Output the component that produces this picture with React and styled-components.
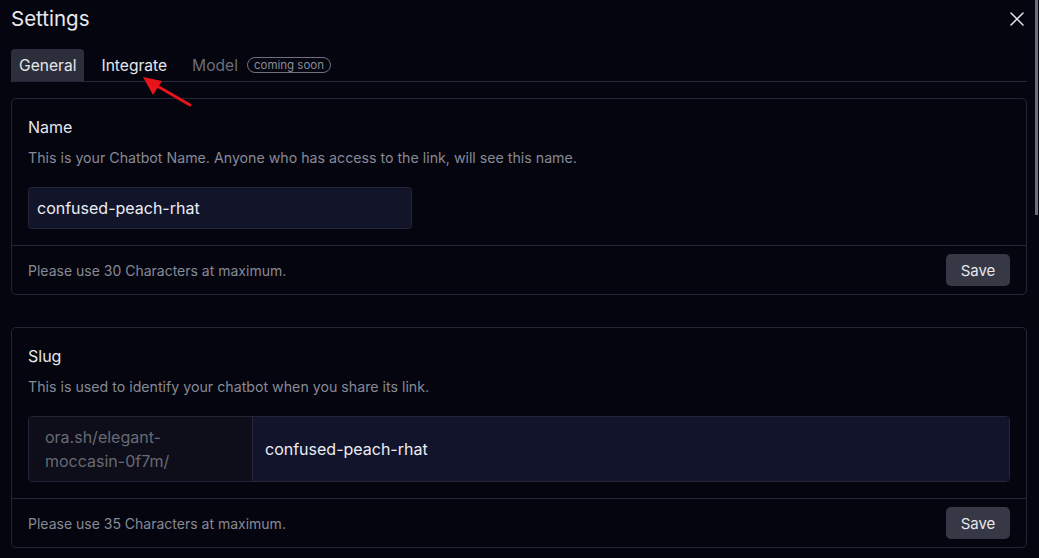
import React from "react"
import styled, { createGlobalStyle } from "styled-components"
import { X } from "lucide-react"

const Global = createGlobalStyle`
  html, body {
    margin: 0;
    padding: 0;
    background: #04050f;
    overflow: hidden;
  }
  * { box-sizing: border-box; }
`

const Scroller = styled.div`
  position: relative;
  height: 100vh;
  overflow: hidden;
  font-family: Inter, "Noto Sans", sans-serif;
  color: #e4e5ea;
`

const ScrollThumb = styled.div`
  position: absolute;
  top: 0;
  right: 1px;
  width: 3px;
  height: 215px;
  background: #6c6f7b;
`

const Content = styled.div`
  padding: 0 12px 0 11px;
`

const Header = styled.div`
  display: flex;
  align-items: center;
  justify-content: space-between;
  height: 36px;
  padding-top: 1px;
`

const Title = styled.h2`
  margin: 0;
  font-size: 20.5px;
  font-weight: 400;
  color: #e8e9ec;
`

const Close = styled.button`
  display: flex;
  background: none;
  border: 0;
  padding: 0;
  margin-right: -2px;
  color: #e8e9ec;
  cursor: pointer;
`

const TabBar = styled.div`
  display: flex;
  align-items: flex-end;
  gap: 9px;
  margin-top: 13px;
  border-bottom: 1px solid #262837;
`

const Tab = styled.div`
  display: flex;
  align-items: center;
  height: 32px;
  padding: 0 8px;
  font-size: 15.6px;
  border-radius: 4px 4px 0 0;
  background: ${p => (p.$active ? "#2c2e3b" : "transparent")};
  color: ${p => (p.$muted ? "#6a6d78" : "#e6e7eb")};
`

const Badge = styled.span`
  margin-left: 9px;
  padding: 0 6px;
  height: 16px;
  line-height: 14px;
  font-size: 11.5px;
  color: #8a8d98;
  border: 1px solid #6f727d;
  border-radius: 999px;
`

const Cards = styled.div`
  display: flex;
  flex-direction: column;
  gap: 32px;
  margin-top: 16px;
`

const Card = styled.section`
  border: 1px solid #232636;
  border-radius: 5px;
`

const CardBody = styled.div`
  padding: 18px 16px 16px;
`

const CardTitle = styled.h3`
  margin: 0;
  font-size: 16px;
  line-height: 20px;
  font-weight: 400;
  color: #e6e7eb;
`

const Hint = styled.p`
  margin: 11px 0 19px;
  font-size: 14.2px;
  line-height: 20px;
  color: #878a95;
`

const TextInput = styled.div`
  width: 384px;
  height: 42px;
  display: flex;
  align-items: center;
  padding: 0 8px;
  font-size: 16px;
  color: #eceef2;
  background: #12142a;
  border: 1px solid #232639;
  border-radius: 4px;
`

const Group = styled.div`
  display: flex;
  height: 66px;
  border: 1px solid #232639;
  border-radius: 4px;
  overflow: hidden;
`

const Prefix = styled.div`
  width: 224px;
  display: flex;
  align-items: center;
  padding: 0 16px;
  font-size: 16px;
  line-height: 24px;
  color: #676a75;
  background: #0d0e19;
  border-right: 1px solid #262838;
`

const GroupField = styled.div`
  flex: 1;
  display: flex;
  align-items: center;
  padding: 0 12px;
  font-size: 16px;
  color: #eceef2;
  background: #12142c;
`

const Footer = styled.div`
  display: flex;
  align-items: center;
  justify-content: space-between;
  padding: 8px 16px;
  border-top: 1px solid #232636;
`

const Note = styled.span`
  font-size: 14px;
  color: #878a95;
`

const SaveButton = styled.button`
  width: 64px;
  height: 32px;
  border: 0;
  border-radius: 5px;
  background: #363845;
  color: #e6e7eb;
  font-family: inherit;
  font-size: 15px;
  cursor: pointer;
`

const Arrow = styled.svg`
  position: absolute;
  left: 138px;
  top: 72px;
  pointer-events: none;
`

const SettingCard = ({ title, hint, note, children }) => (
  <Card>
    <CardBody>
      <CardTitle>{title}</CardTitle>
      <Hint>{hint}</Hint>
      {children}
    </CardBody>
    <Footer>
      <Note>{note}</Note>
      <SaveButton>Save</SaveButton>
    </Footer>
  </Card>
)

export default function App() {
  return (
    <>
      <Global />
      <Scroller>
        <Content>
          <Header>
            <Title>Settings</Title>
            <Close aria-label="close">
              <X size={24} strokeWidth={1.5} />
            </Close>
          </Header>
          <TabBar>
            <Tab $active>General</Tab>
            <Tab>Integrate</Tab>
            <Tab $muted>
              Model<Badge>coming soon</Badge>
            </Tab>
          </TabBar>
          <Cards>
            <SettingCard
              title="Name"
              hint="This is your Chatbot Name. Anyone who has access to the link, will see this name."
              note="Please use 30 Characters at maximum."
            >
              <TextInput>confused-peach-rhat</TextInput>
            </SettingCard>
            <SettingCard
              title="Slug"
              hint="This is used to identify your chatbot when you share its link."
              note="Please use 35 Characters at maximum."
            >
              <Group>
                <Prefix>ora.sh/elegant-moccasin-0f7m/</Prefix>
                <GroupField>confused-peach-rhat</GroupField>
              </Group>
            </SettingCard>
          </Cards>
        </Content>
        <ScrollThumb />
        <Arrow width="60" height="40" viewBox="0 0 60 40">
          <line x1="52" y1="33" x2="14" y2="11" stroke="#e8141c" strokeWidth="3" strokeLinecap="round" />
          <polygon points="5,5 24,9 15,23" fill="#e8141c" />
        </Arrow>
      </Scroller>
    </>
  )
}
